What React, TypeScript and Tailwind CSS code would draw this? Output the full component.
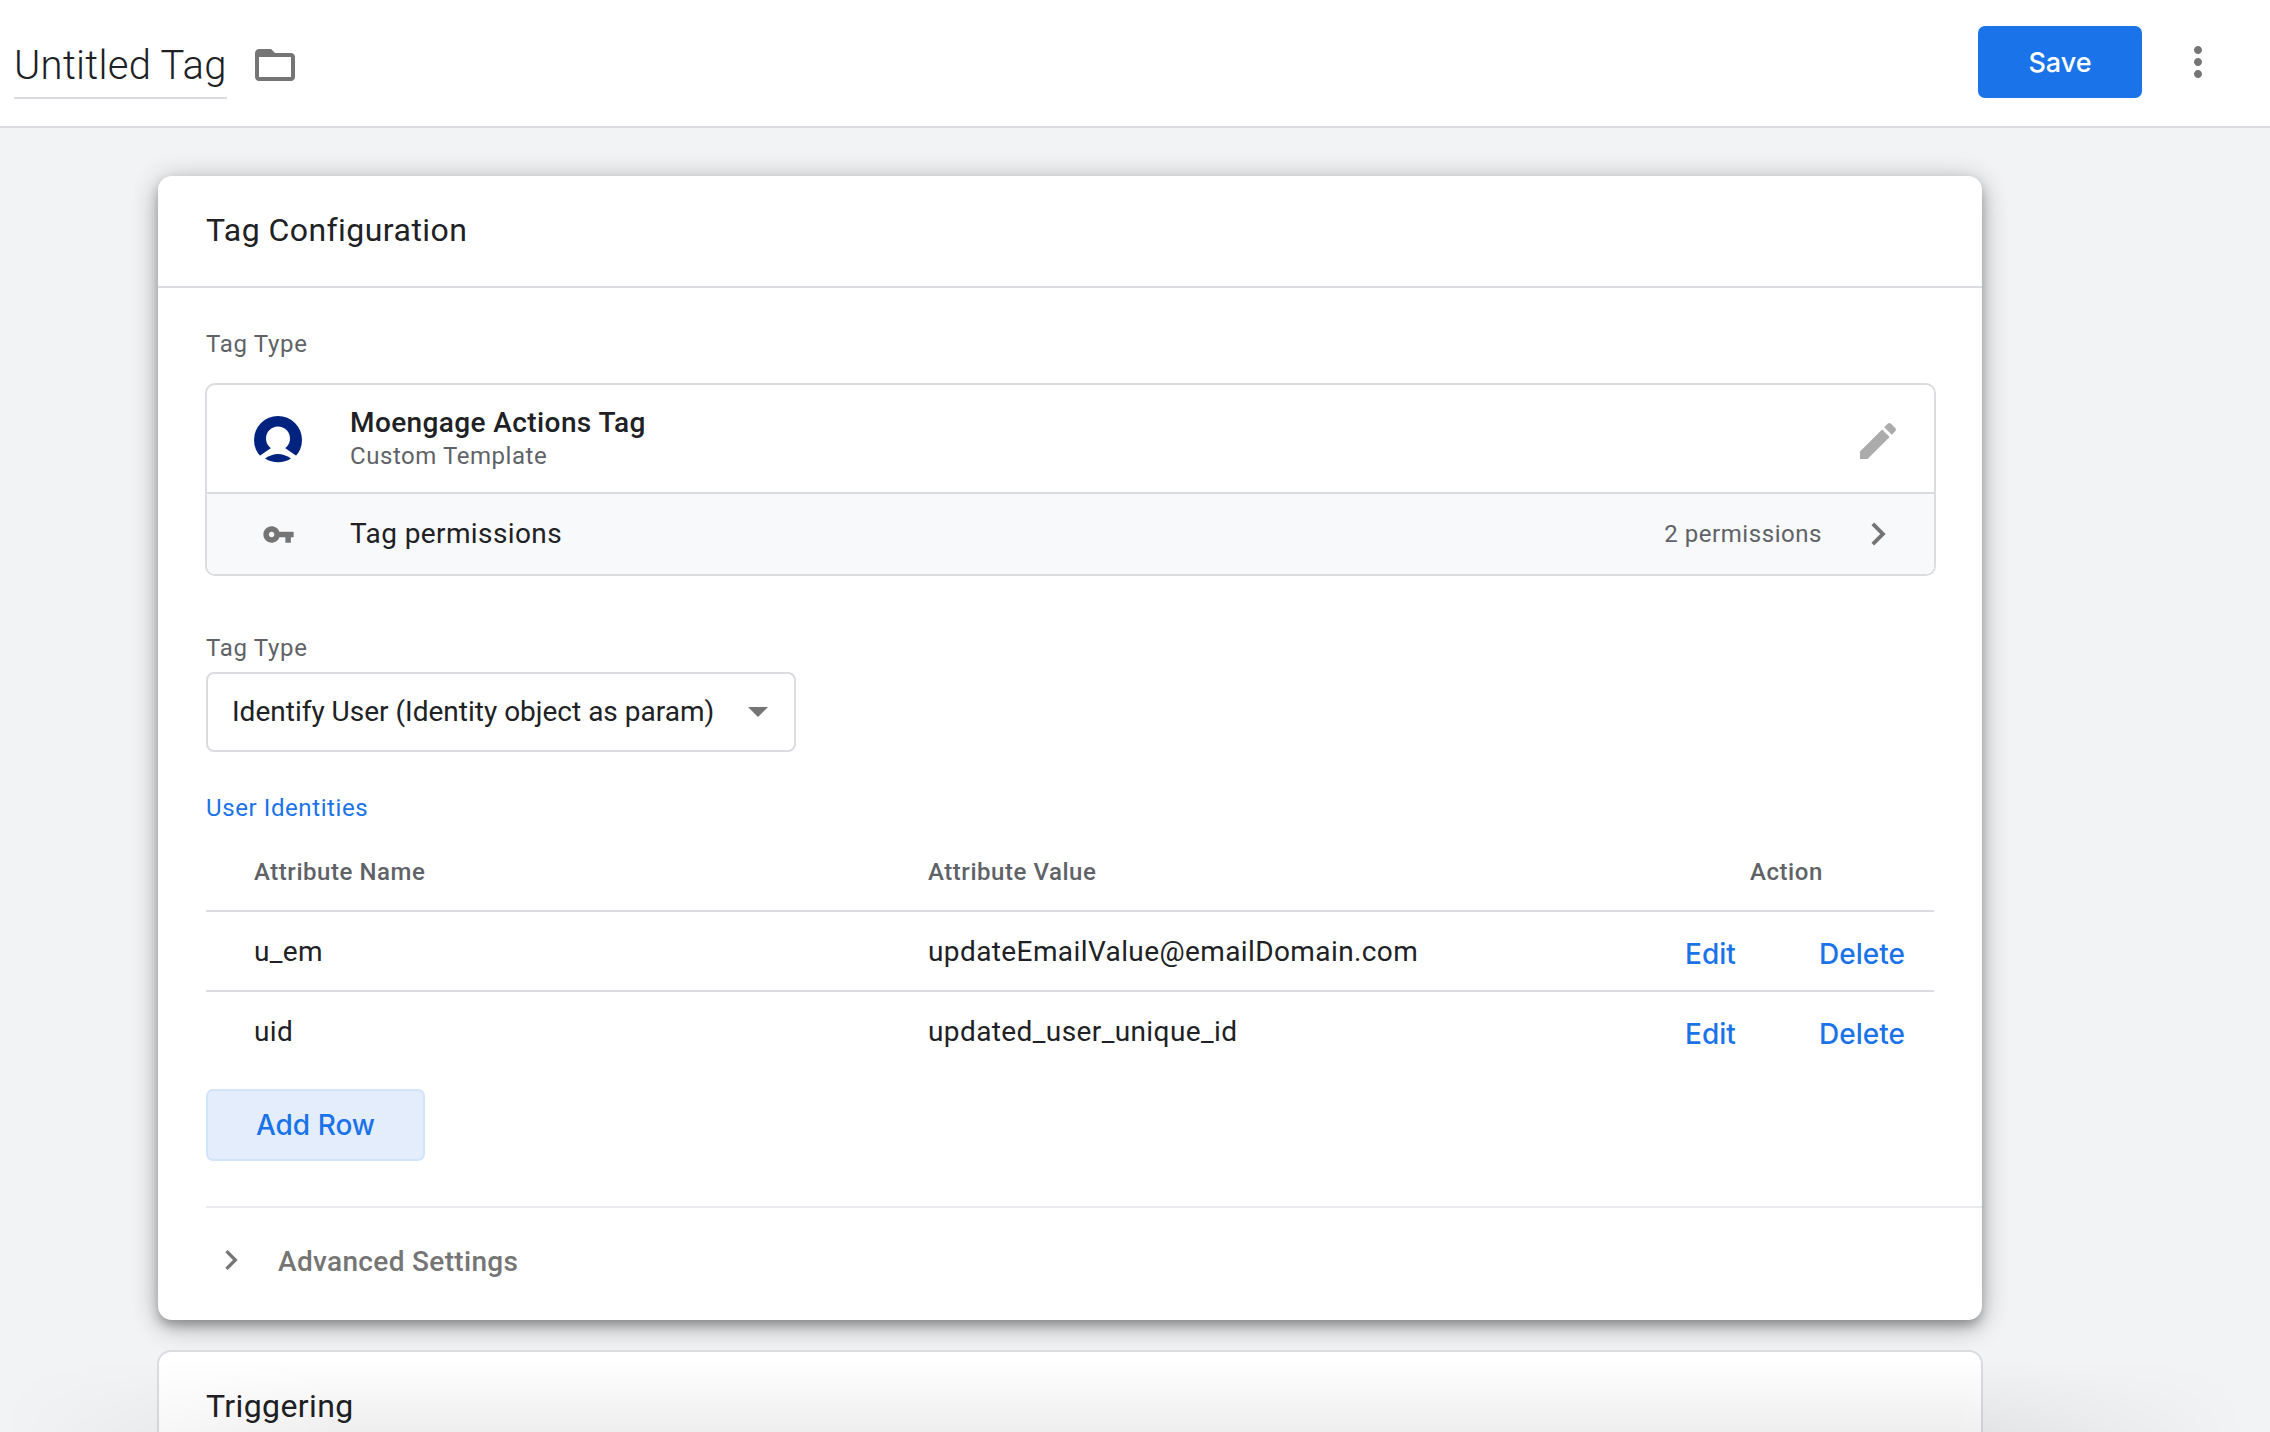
import React from 'react';

const Icon = ({ d, size, className }: { d: string; size: number; className?: string }) => (
  <svg width={size} height={size} viewBox="0 0 24 24" fill="currentColor" className={className}>
    <path d={d} />
  </svg>
);

const CHEVRON = 'M10 6L8.59 7.41 13.17 12l-4.58 4.59L10 18l6-6z';

const MoengageLogo = () => (
  <svg width="48" height="48" viewBox="0 0 48 48">
    <circle cx="24" cy="24" r="24" fill="#00237f" />
    <path d="M17 32 L4 41 L4 48 H44 L44 41 L31 32 Z" fill="#fff" />
    <ellipse cx="24" cy="22.5" rx="12" ry="12" fill="#fff" />
    <path d="M11 42.5 Q24 33.5 37 42.5 A24 24 0 0 1 11 42.5 Z" fill="#00237f" />
  </svg>
);

const rows = [
  { name: 'u_em', value: 'updateEmailValue@emailDomain.com' },
  { name: 'uid', value: 'updated_user_unique_id' },
];

export default function App() {
  return (
    <div className="relative h-[1432px] overflow-hidden bg-[#f1f3f4] font-['Roboto',sans-serif]">
      <header className="flex h-[128px] items-center border-b-2 border-[#dadce0] bg-white pl-[14px]">
        <div className="mt-[1px] flex h-[70px] items-center border-b-2 border-[#dadce0] pt-[6px] text-[40px] font-light leading-none tracking-[0.3px] text-[#202124]">
          Untitled Tag
        </div>
        <Icon
          size={48}
          className="ml-[24px] mt-[3px] text-[#757575]"
          d="M20 6h-8l-2-2H4c-1.1 0-1.99.9-1.99 2L2 18c0 1.1.9 2 2 2h16c1.1 0 2-.9 2-2V8c0-1.1-.9-2-2-2zm0 12H4V8h16v10z"
        />
        <button className="ml-auto mb-[2px] h-[72px] w-[164px] rounded-[7px] bg-[#1a73e8] pt-[2px] font-['Inter',sans-serif] text-[27px] font-medium text-white">
          Save
        </button>
        <Icon
          size={48}
          className="ml-[32px] mr-[48px] mb-[2px] text-[#757575]"
          d="M12 8c1.1 0 2-.9 2-2s-.9-2-2-2-2 .9-2 2 .9 2 2 2zm0 2c-1.1 0-2 .9-2 2s.9 2 2 2 2-.9 2-2-.9-2-2-2zm0 6c-1.1 0-2 .9-2 2s.9 2 2 2 2-.9 2-2-.9-2-2-2z"
        />
      </header>

      <main className="flex flex-col pl-[158px] pt-[48px]">
        <section className="h-[1144px] w-[1824px] rounded-[14px] bg-white shadow-[0_6px_12px_-1px_rgba(0,0,0,0.3),0_8px_28px_rgba(0,0,0,0.2),0_0_28px_rgba(60,64,67,0.13)]">
          <div className="flex h-[112px] items-center border-b-2 border-[#dadce0] pb-[2px] pl-[48px] text-[32px] leading-none tracking-[0.45px] text-[#202124]">
            Tag Configuration
          </div>

          <div className="flex flex-col pl-[48px] pr-[46px]">
            <div className="mt-[40px] text-[24px] leading-[32px] tracking-[0.7px] text-[#5f6368]">Tag Type</div>

            <div className="ml-[-1px] mt-[23px] overflow-hidden rounded-[10px] border-2 border-[#dadce0]">
              <div className="flex h-[107px] items-center">
                <div className="ml-[47px] mt-[2px] flex w-[96px] shrink-0">
                  <MoengageLogo />
                </div>
                <div className="flex flex-col">
                  <div className="text-[28px] font-medium leading-[34px] tracking-[0.4px] text-[#202124]">Moengage Actions Tag</div>
                  <div className="text-[24px] leading-[32px] tracking-[0.55px] text-[#5f6368]">Custom Template</div>
                </div>
                <Icon
                  size={48}
                  className="ml-auto mr-[32px] mt-[5px] text-[#ababab]"
                  d="M3 17.25V21h3.75L17.81 9.94l-3.75-3.75L3 17.25zM20.71 7.04c.39-.39.39-1.02 0-1.41l-2.34-2.34c-.39-.39-1.02-.39-1.41 0l-1.83 1.83 3.75 3.75 1.83-1.83z"
                />
              </div>
              <div className="flex h-[82px] items-center border-t-2 border-[#dadce0] bg-[#f8f9fa]">
                <div className="ml-[55px] flex w-[88px] shrink-0">
                  <Icon
                    size={33}
                    className="text-[#757575]"
                    d="M12.65 10C11.83 7.67 9.61 6 7 6c-3.31 0-6 2.69-6 6s2.69 6 6 6c2.61 0 4.83-1.67 5.65-4H17v4h4v-4h2v-4H12.65zM7 14c-1.1 0-2-.9-2-2s.9-2 2-2 2 .9 2 2-.9 2-2 2z"
                  />
                </div>
                <div className="text-[28px] leading-none tracking-[0.4px] text-[#202124]">Tag permissions</div>
                <div className="ml-auto text-[24px] leading-none tracking-[0.55px] text-[#5f6368]">2 permissions</div>
                <Icon size={46} className="ml-[33px] mr-[33px] text-[#757575]" d={CHEVRON} />
              </div>
            </div>

            <div className="mt-[56px] text-[24px] leading-[32px] tracking-[0.7px] text-[#5f6368]">Tag Type</div>
            <div className="mt-[8px] flex h-[80px] w-[590px] items-center rounded-[8px] border-2 border-[#dadce0] pl-[24px] pr-[26px]">
              <span className="text-[28px] leading-none text-[#202124]">Identify User (Identity object as param)</span>
              <span className="ml-auto h-0 w-0 border-x-[10px] border-t-[10px] border-x-transparent border-t-[#757575]" />
            </div>

            <div className="mt-[40px] text-[24px] leading-[32px] tracking-[0.6px] text-[#1a73e8]">User Identities</div>

            <div className="mr-[2px] mt-[32px] flex flex-col">
              <div className="grid h-[56px] grid-cols-[722px_757px_1fr] items-center border-b-2 border-[#dadce0] pb-[22px] text-[24px] font-medium leading-none tracking-[0.55px] text-[#5f6368]">
                <span className="pl-[48px]">Attribute Name</span>
                <span>Attribute Value</span>
                <span className="pl-[65px]">Action</span>
              </div>
              {rows.map((row, i) => (
                <div
                  key={row.name}
                  className={`grid h-[80px] grid-cols-[722px_757px_134px_1fr] items-center text-[28px] leading-none tracking-[0.4px] text-[#202124] ${i === 0 ? 'border-b-2 border-[#dadce0] pt-[2px]' : ''}`}
                >
                  <span className="pl-[48px]">{row.name}</span>
                  <span>{row.value}</span>
                  <span className="pt-[3px] font-['Inter',sans-serif] text-[28px] font-medium tracking-normal text-[#1a73e8]">Edit</span>
                  <span className="pt-[3px] font-['Inter',sans-serif] text-[28px] font-medium tracking-normal text-[#1a73e8]">Delete</span>
                </div>
              ))}
            </div>

            <button className="mt-[17px] h-[72px] w-[219px] rounded-[7px] border-2 border-[#d2e3fc] bg-[#e4edfc] font-['Inter',sans-serif] text-[28px] font-medium text-[#1a73e8]">
              Add Row
            </button>
          </div>

          <div className="ml-[48px] mt-[45px] flex h-[112px] items-center border-t-2 border-[#e8eaed] pb-[2px]">
            <Icon size={40} className="ml-[5px] mb-[5px] text-[#757575]" d={CHEVRON} />
            <span className="ml-[27px] text-[28px] font-medium leading-none tracking-[0.33px] text-[#757575]">Advanced Settings</span>
          </div>
        </section>

        <section className="mt-[30px] ml-[-1px] h-[200px] w-[1826px] rounded-[14px] border-2 border-[#dadce0] bg-white pl-[47px] pt-[34px] text-[32px] leading-[40px] tracking-[0.4px] text-[#202124]">
          Triggering
        </section>
      </main>

      <div className="pointer-events-none absolute inset-x-0 bottom-0 h-[72px] bg-gradient-to-t from-[rgba(0,0,0,0.065)] to-transparent [mask-image:linear-gradient(to_right,transparent,black_15%,black_86%,transparent_99%)]" />
    </div>
  );
}
